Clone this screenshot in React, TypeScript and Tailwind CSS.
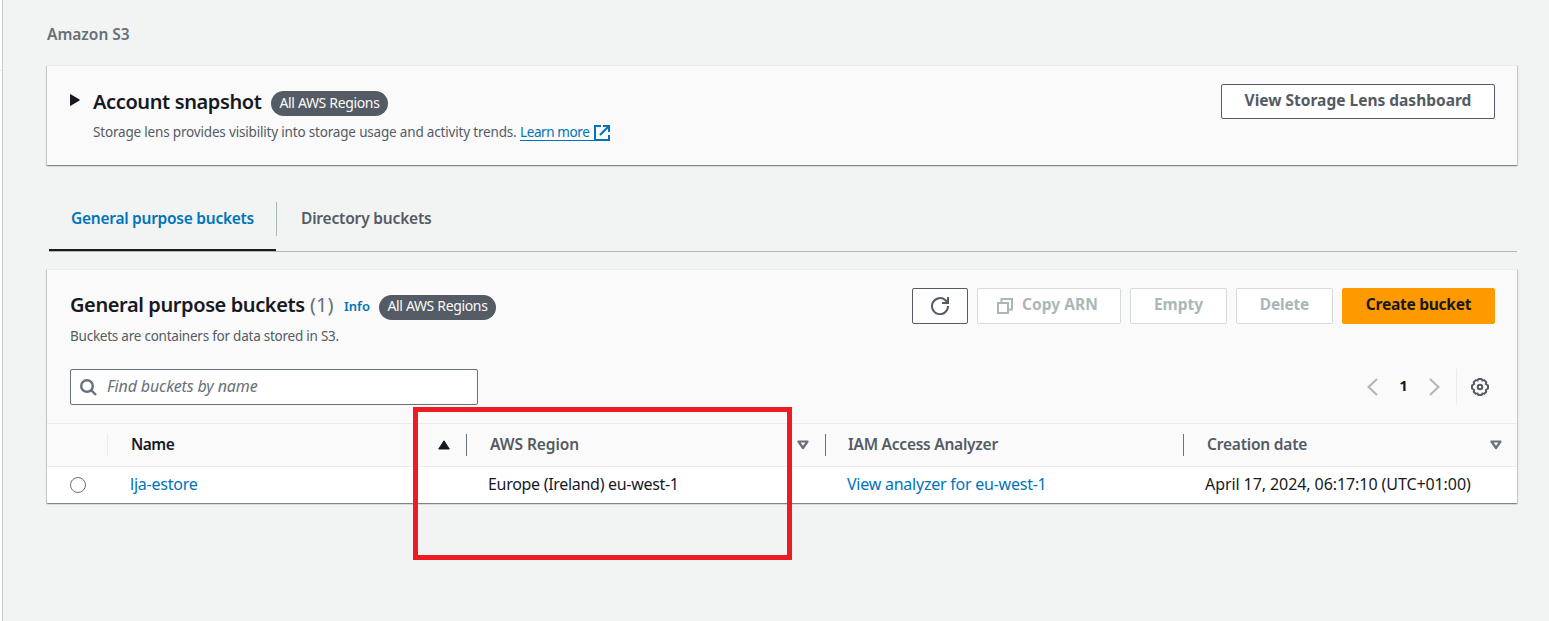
import React from "react";

const cardShadow =
  "shadow-[0_1px_1px_0_rgba(0,28,36,0.3),1px_1px_1px_0_rgba(0,28,36,0.15),-1px_1px_1px_0_rgba(0,28,36,0.15)]";

function RegionsBadge() {
  return (
    <span className="flex h-[25px] w-[117px] shrink-0 items-center justify-center rounded-full bg-[#545b64] pb-[3px] text-[14px] tracking-[-0.34px] whitespace-nowrap text-[#fafafa]">
      All AWS Regions
    </span>
  );
}

function Button({ className, children }: { className: string; children: React.ReactNode }) {
  return (
    <button
      className={`flex shrink-0 items-center justify-center rounded-[2px] border pb-[2px] text-[15.5px] font-bold whitespace-nowrap ${className}`}
    >
      {children}
    </button>
  );
}

function ExternalIcon() {
  return (
    <svg className="h-[17px] w-[17px]" viewBox="0 0 17 17" fill="none" stroke="#0073bb" strokeWidth="2">
      <path d="M7 2H1v14h14v-5M9 2h6v6M15 2L6 11" />
    </svg>
  );
}

function RefreshIcon() {
  return (
    <svg className="relative top-px h-[18px] w-[18px]" viewBox="0 0 18 18" fill="none" stroke="#545b64" strokeWidth="2">
      <path d="M17 9a8 8 0 1 1-2.500-5.700L17 6M17 0v6h-6" />
    </svg>
  );
}

function CopyIcon() {
  return (
    <svg className="relative top-px h-4 w-4" viewBox="0 0 16 16" fill="none" stroke="#aab7b8" strokeWidth="2">
      <path d="M1 5h10v10H1zM4.500 5V1H15v10.500h-4" />
    </svg>
  );
}

function SearchIcon() {
  return (
    <svg className="h-[17px] w-[17px]" viewBox="0 0 17 17" fill="none" stroke="#687078" strokeWidth="2.400">
      <circle cx="7" cy="7" r="5.800" />
      <path d="M11 11l5 5" />
    </svg>
  );
}

function ChevronIcon({ right = false }: { right?: boolean }) {
  return (
    <svg className="h-[18px] w-[11px]" viewBox="0 0 11 18" fill="none" stroke="#aab7b8" strokeWidth="2">
      <path d={right ? "M1 1l8.500 8L1 17" : "M10 1L1.500 9l8.500 8"} />
    </svg>
  );
}

function GearIcon() {
  return (
    <svg className="h-[18px] w-[18px]" viewBox="0 0 18 18" fill="none" stroke="#545b64" strokeWidth="2">
      <path
        strokeLinejoin="round"
        d="M7.500 1h3l.9 1.600 1.800-.5 2.100 2.100-.5 1.800L17 7.500v3l-2.200 1.500.5 1.800-2.100 2.100-1.800-.5-.9 1.600h-3l-.9-1.600-1.800.5-2.100-2.100.5-1.800L1 10.500v-3L3.200 6l-.5-1.800 2.100-2.100 1.800.5z"
      />
      <circle cx="9" cy="9" r="2.200" />
    </svg>
  );
}

function SortIcon({ ascending = false }: { ascending?: boolean }) {
  return ascending ? (
    <svg className="h-[10px] w-[12px]" viewBox="0 0 12 10" fill="#16191f" stroke="#16191f" strokeWidth="1" strokeLinejoin="round">
      <path d="M6 .8L11.300 9H.7z" />
    </svg>
  ) : (
    <svg className="h-[10px] w-[12px]" viewBox="0 0 12 10" fill="none" stroke="#687078" strokeWidth="2.200" strokeLinejoin="round">
      <path d="M1.500 1.500h9L6 8z" />
    </svg>
  );
}

const headText = "text-[15.5px] font-semibold whitespace-nowrap";

export default function App() {
  return (
    <div className="relative flex h-[621px] w-full overflow-hidden bg-white font-['Noto_Sans','Open_Sans',sans-serif] text-[#16191f]">
      <div className="flex w-[2px] shrink-0 flex-col">
        <div className="h-[71px] border-b border-[#eaeded]" />
      </div>
      <main className="min-w-0 grow border-l border-[#c4cbcb] bg-[#f2f3f3] pr-8 pl-11">
        <nav className="flex h-[65px] items-center pt-[5px]">
          <span className="text-[15.5px] font-semibold tracking-[0px] whitespace-nowrap text-[#687078]">Amazon S3</span>
        </nav>

        <section className={`flex h-[100px] justify-between border-t border-[#eaeded] bg-[#fafafa] pr-[22px] pl-[23px] ${cardShadow}`}>
          <div className="flex">
            <svg className="mt-[28px] h-3 w-[10px]" viewBox="0 0 10 12" fill="#16191f">
              <path d="M0 0.500Q0 0 .7.200L9.500 5.500Q10 6 9.500 6.500L.7 11.800Q0 12 0 11.500z" />
            </svg>
            <div className="ml-[13px]">
              <div className="mt-[24px] flex h-[27px] items-center gap-[9px]">
                <h2 className="w-[169px] pb-[4px] text-[20px] font-semibold tracking-[-0.38px] whitespace-nowrap">Account snapshot</h2>
                <RegionsBadge />
              </div>
              <div className="mt-[5px] flex h-5 items-center">
                <span className="w-[427px] text-[13.5px] tracking-[-0.18px] whitespace-nowrap text-[#545b64]">
                  Storage lens provides visibility into storage usage and activity trends.
                </span>
                <a className="flex h-[17px] w-[74px] items-center border-b border-[#0073bb] pt-[2px] text-[13.5px] tracking-[-0.4px] whitespace-nowrap text-[#0073bb]">Learn more</a>
                <ExternalIcon />
              </div>
            </div>
          </div>
          <Button className="mt-[18px] h-[35px] w-[274px] border-[#545b64] bg-white text-[#545b64]">View Storage Lens dashboard</Button>
        </section>

        <div className="mt-[37px] ml-[2px] flex h-[50px] border-b border-[#aab7b8]">
          <div className="flex w-[227px] justify-center border-b-2 border-[#16191f]">
            <span className="mt-[5px] text-[15.5px] font-semibold tracking-[-0.26px] whitespace-nowrap text-[#0073bb]">General purpose buckets</span>
          </div>
          <div className="h-[34px] w-px bg-[#aab7b8]" />
          <span className="mt-[5px] ml-6 text-[15.5px] font-semibold tracking-[-0.18px] whitespace-nowrap text-[#545b64]">Directory buckets</span>
        </div>

        <section className={`mt-[17px] h-[234px] border-t border-[#eaeded] bg-[#fafafa] ${cardShadow}`}>
          <div className="flex h-[99px] justify-between pr-[22px] pl-[23px]">
            <div className="pt-[24px]">
              <div className="flex h-[26px] items-center">
                <h2 className="w-[240px] pb-[5px] text-[20px] font-semibold tracking-[-0.4px] whitespace-nowrap">General purpose buckets</h2>
                <span className="w-[34px] pb-[5px] text-[20px] whitespace-nowrap text-[#687078]">(1)</span>
                <span className="w-[35px] pb-px text-[13px] font-semibold whitespace-nowrap text-[#0073bb]">Info</span>
                <RegionsBadge />
              </div>
              <p className="mt-[6px] text-[13.5px] leading-5 tracking-[-0.24px] whitespace-nowrap text-[#545b64]">Buckets are containers for data stored in S3.</p>
            </div>
            <div className="flex h-[36px] gap-[9px] pt-[18px]">
              <Button className="h-9 w-14 border-[#545b64] bg-white"><RefreshIcon /></Button>
              <Button className="h-9 w-36 gap-[9px] border-[#d5dbdb] bg-white pr-[3px] tracking-[0.05px] text-[#aab7b8]"><CopyIcon />Copy ARN</Button>
              <Button className="h-9 w-[97px] border-[#d5dbdb] bg-white text-[#aab7b8]">Empty</Button>
              <Button className="h-9 w-[97px] border-[#d5dbdb] bg-white tracking-[-0.2px] text-[#aab7b8]">Delete</Button>
              <Button className="h-9 w-[153px] border-[#ff9900] bg-[#ff9900] tracking-[-0.25px] text-[#16191f]">Create bucket</Button>
            </div>
          </div>

          <div className="flex h-[54px] justify-between pr-[28px] pl-[23px]">
            <div className="flex h-9 w-[408px] items-center gap-[10px] rounded-[2px] border border-[#687078] bg-white pl-[9px]">
              <SearchIcon />
              <span className="pb-[2px] text-[16px] tracking-[-0.13px] whitespace-nowrap text-[#687078] italic">Find buckets by name</span>
            </div>
            <div className="flex h-9 items-center">
              <ChevronIcon />
              <span className="w-[51px] pb-[3px] text-center text-[15px] font-bold">1</span>
              <ChevronIcon right />
              <div className="ml-4 h-9 w-px bg-[#eaeded]" />
              <div className="ml-[14px]"><GearIcon /></div>
            </div>
          </div>

          <div className="flex h-[44px] items-center border-y border-[#eaeded] text-[#545b64]">
            <div className="h-[22px] w-[61px] border-r border-[#eaeded]" />
            <div className="flex h-[22px] w-[359px] items-center justify-between border-r border-[#687078] pr-[16px] pl-[23px]">
              <span className={`${headText} tracking-[-0.5px] text-[#16191f]`}>Name</span>
              <SortIcon ascending />
            </div>
            <div className="flex h-[22px] w-[359px] items-center justify-between border-r border-[#687078] pr-[16px] pl-[23px]">
              <span className={`${headText} tracking-[-0.05px]`}>AWS Region</span>
              <SortIcon />
            </div>
            <div className="flex h-[22px] w-[358px] items-center border-r border-[#687078] pl-[22px]">
              <span className={`${headText} tracking-[-0.24px]`}>IAM Access Analyzer</span>
            </div>
            <div className="flex h-[22px] grow items-center justify-between pr-[15px] pl-[23px]">
              <span className={`${headText} tracking-[-0.2px]`}>Creation date</span>
              <SortIcon />
            </div>
          </div>
          <div className="flex h-[36px] items-center bg-white pb-[2px] text-[16px] whitespace-nowrap">
            <div className="w-[83px] pl-[23px]">
              <div className="mt-[2px] h-4 w-4 rounded-full border border-[#687078] bg-white" />
            </div>
            <span className="w-[358px] tracking-[-0.23px] text-[#0073bb]">lja-estore</span>
            <span className="w-[359px] tracking-[-0.3px]">Europe (Ireland) eu-west-1</span>
            <span className="w-[358px] tracking-[-0.24px] text-[#0073bb]">View analyzer for eu-west-1</span>
            <span className="tracking-[-0.08px]">April 17, 2024, 06:17:10 (UTC+01:00)</span>
          </div>
        </section>
      </main>
      <div className="absolute top-[407px] left-[413px] h-[153px] w-[379px] border-[5px] border-[#ed1c24]" />
    </div>
  );
}
